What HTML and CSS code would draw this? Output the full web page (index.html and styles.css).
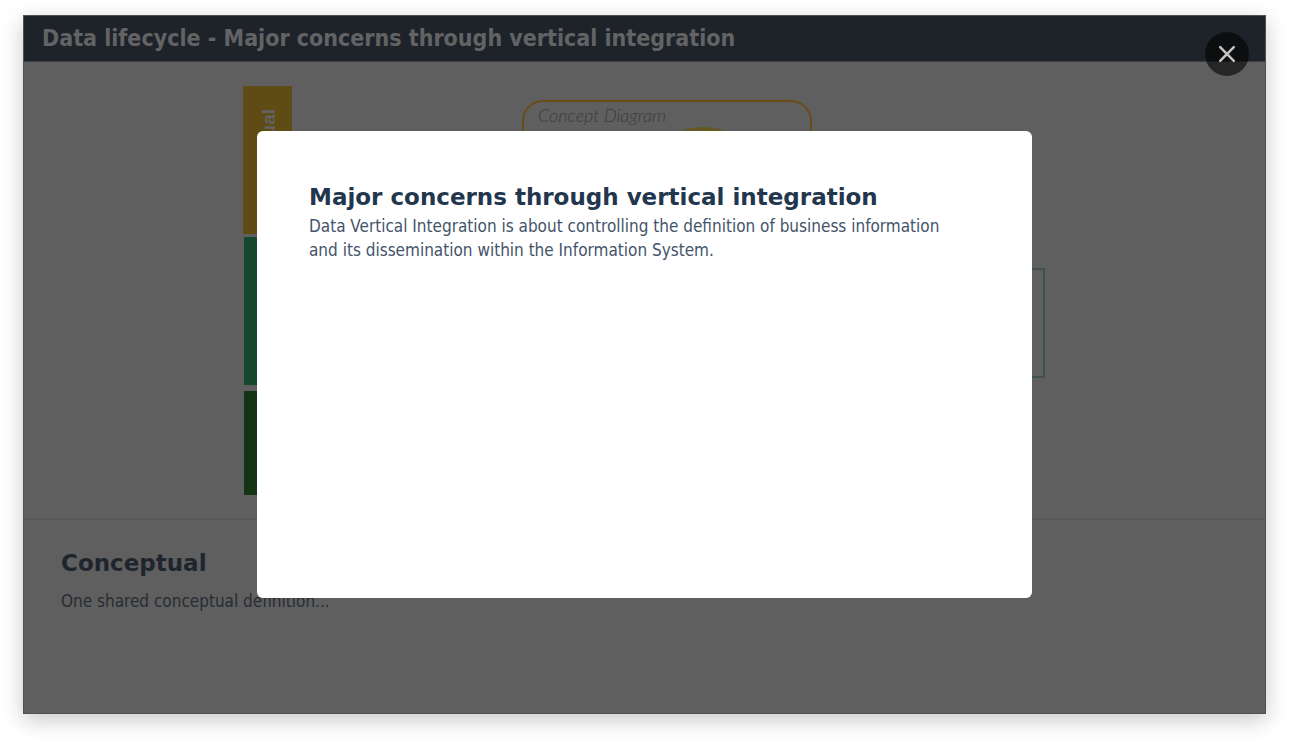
FILE: index.html
```html
<!DOCTYPE html>
<html lang="en">
<head>
<meta charset="utf-8">
<title>Data lifecycle</title>
<link rel="stylesheet" href="styles.css">
</head>
<body>
<div class="window">
  <header class="window-header">
    <h1 class="window-title">Data lifecycle - Major concerns through vertical integration</h1>
  </header>
  <main class="window-body">
    <section class="diagram-panel">
      <svg class="diagram" viewBox="0 0 804 412" aria-hidden="true">
        <rect x="0" y="2" width="49" height="148" fill="#5f4b14"/>
        <rect x="1" y="153" width="49" height="148" fill="#15492f"/>
        <rect x="1" y="307" width="49" height="104" fill="#153315"/>
        <text class="level-label" transform="translate(32 25) rotate(-90)" text-anchor="end">Conceptual</text>
        <rect x="280" y="17" width="288" height="110" rx="20" fill="none" stroke="#694d17" stroke-width="2"/>
        <ellipse cx="460" cy="63" rx="36" ry="20" fill="#665723"/>
        <text class="diagram-label" x="295" y="38">Concept Diagram</text>
        <rect x="600" y="185" width="201" height="108" fill="none" stroke="#405148" stroke-width="2"/>
      </svg>
    </section>
    <section class="detail">
      <h2 class="detail-title">Conceptual</h2>
      <p class="detail-text">One shared conceptual definition...</p>
    </section>
  </main>
  <div class="overlay">
    <div class="modal" role="dialog" aria-modal="true" aria-labelledby="modal-title">
      <h2 class="modal-title" id="modal-title">Major concerns through vertical integration</h2>
      <p class="modal-text">Data Vertical Integration is about controlling the definition of business information and its dissemination within the Information System.</p>
    </div>
    <button class="close" type="button" aria-label="Close">
      <svg width="18" height="18" viewBox="0 0 18 18" fill="none" stroke="#c4c4c4" stroke-width="2.5" stroke-linecap="round"><path d="M2.2 2.2 15.8 15.8M15.8 2.2 2.2 15.8"/></svg>
    </button>
  </div>
</div>
</body>
</html>
```
FILE: styles.css
```css
* {
  box-sizing: border-box;
}

body {
  margin: 0;
  padding: 15px 23px 31px;
  background: #fff;
  font-family: "DejaVu Sans", sans-serif;
}

h1,
h2,
p {
  margin: 0;
}

.window {
  position: relative;
  display: flex;
  flex-direction: column;
  min-height: calc(100vh - 46px);
  border: 1px solid #505152;
  background: #5f5f5f;
  box-shadow: 0 6px 20px rgba(0, 0, 0, 0.22);
}

.window-header {
  padding: 8px 18px;
  background: #1e232a;
  border-bottom: 1px solid #3c4045;
}

.window-title,
.detail-text,
.modal-text {
  font-family: "DejaVu Sans Condensed", "DejaVu Sans", sans-serif;
}

.window-title {
  font-size: 23px;
  line-height: 29px;
  color: #626364;
}

.diagram-panel {
  display: flex;
  justify-content: center;
  padding: 22px 24px;
  border-bottom: 2px solid #585858;
}

.diagram {
  width: 100%;
  max-width: 804px;
}

.level-label {
  font: bold 19px "Liberation Sans", sans-serif;
  fill: #626262;
}

.diagram-label {
  font: italic 300 18px Lato, sans-serif;
  fill: #3c3c3c;
}

.detail {
  padding: 27px 37px;
}

.detail-title,
.modal-title {
  font-size: 23px;
  line-height: 32px;
}

.detail-text,
.modal-text {
  font-size: 17px;
  line-height: 24px;
}

.detail-title {
  color: #1e252d;
}

.detail-text {
  margin-top: 10px;
  color: #272c33;
}

.overlay {
  position: absolute;
  inset: 0;
  display: flex;
  align-items: center;
  justify-content: center;
}

.modal {
  width: 775px;
  max-width: calc(100% - 64px);
  aspect-ratio: 775 / 467;
  padding: 50px 64px 50px 52px;
  border-radius: 6px;
  background: #fff;
}

.modal-title {
  color: #22364e;
}

.modal-text {
  margin-top: 1px;
  color: #44546a;
}

.close {
  position: absolute;
  top: 16px;
  right: 16px;
  display: grid;
  place-items: center;
  width: 44px;
  height: 44px;
  padding: 0;
  border: 0;
  border-radius: 50%;
  background: rgba(0, 0, 0, 0.6);
  cursor: pointer;
}
```
